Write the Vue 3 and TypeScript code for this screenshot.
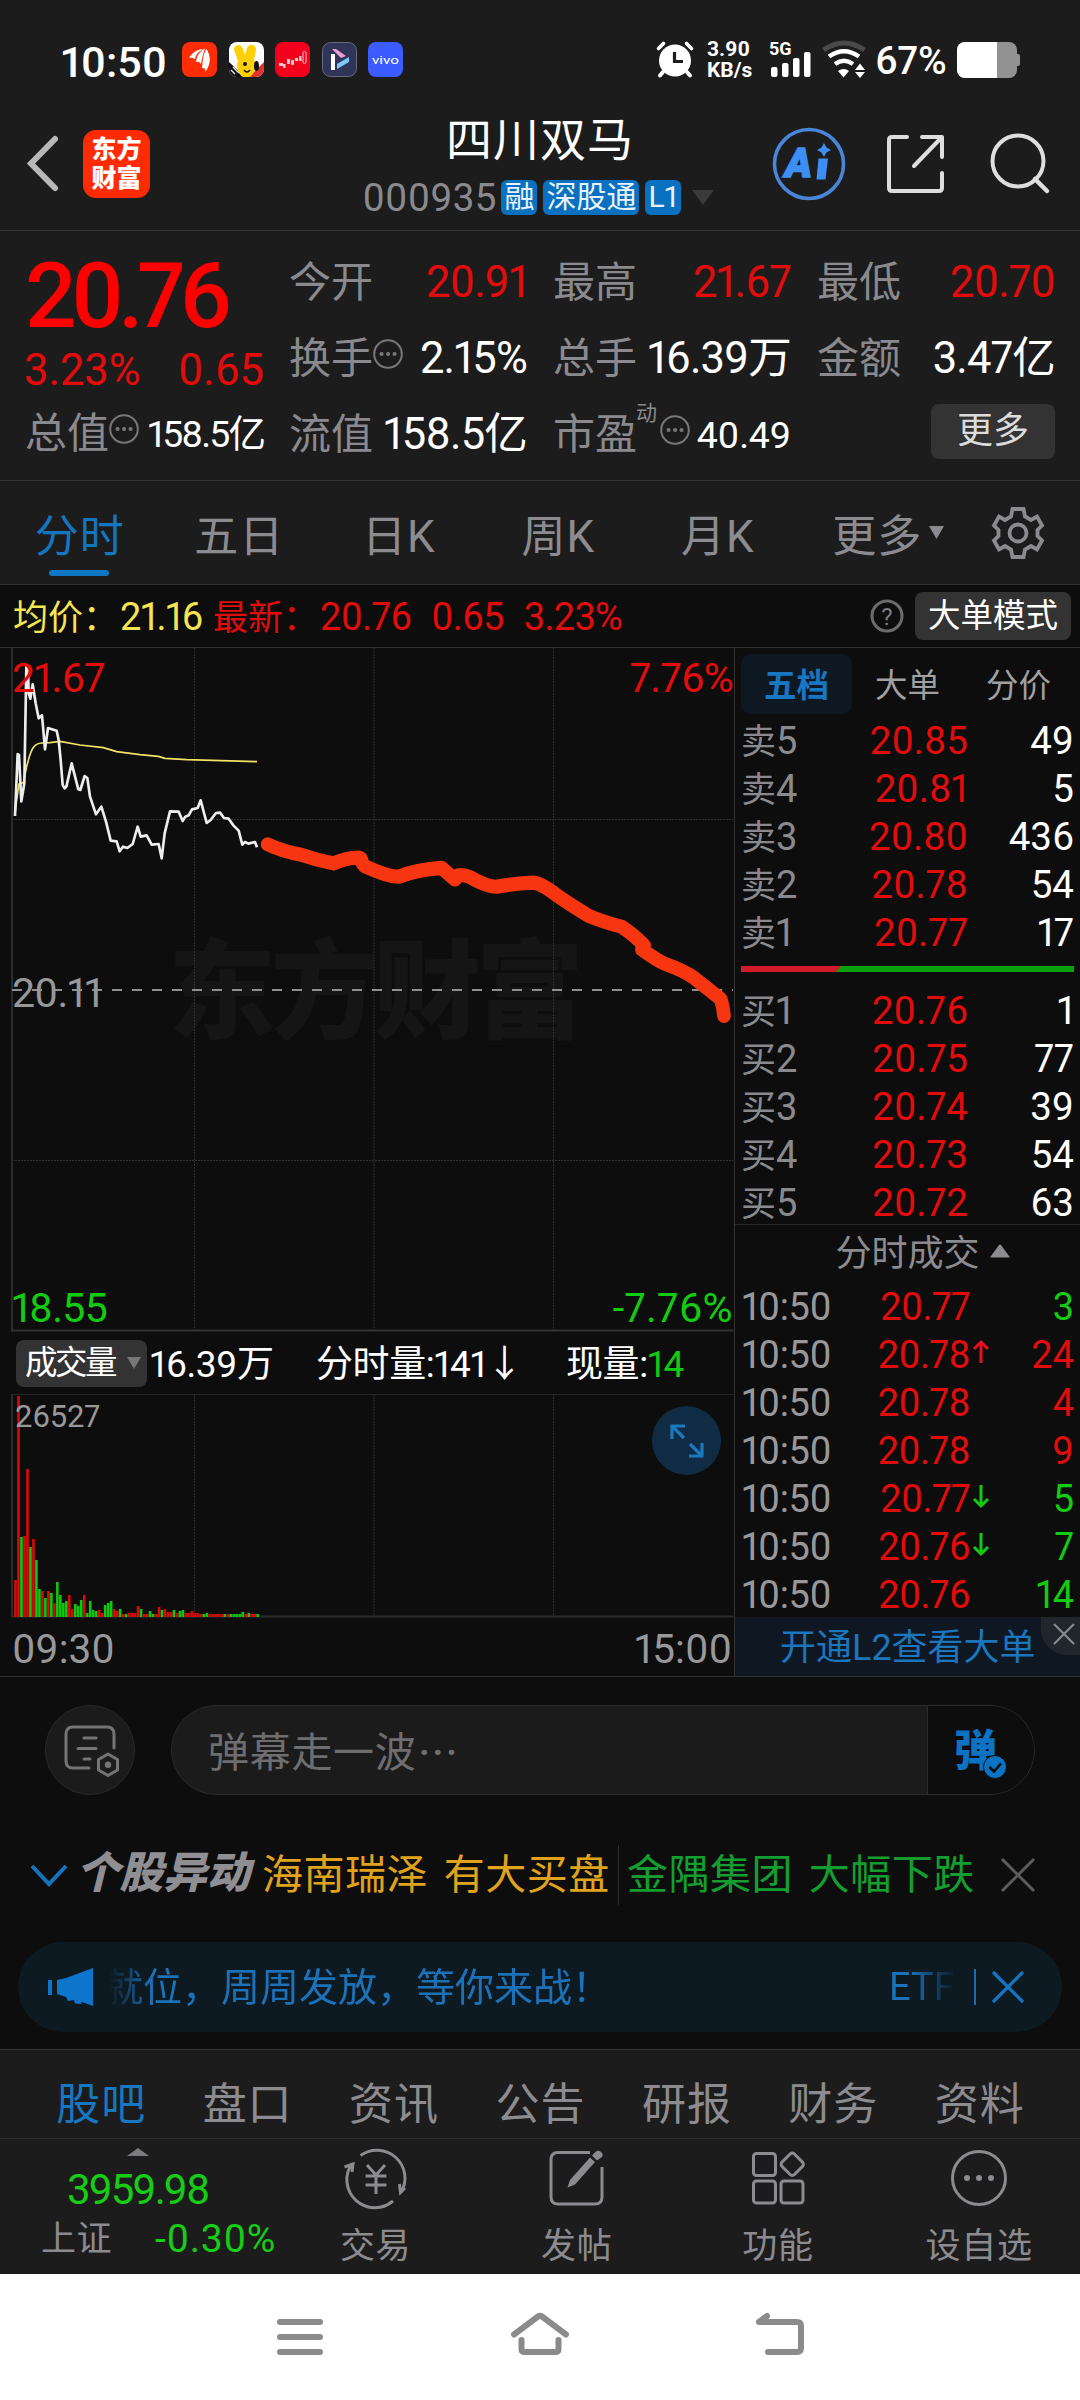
<script setup lang="ts">
interface Stat { label: string; value: string; red?: boolean; dots?: boolean; sup?: string; small?: boolean; tight?: boolean; more?: boolean }
interface Trade { price: string; dir?: 'up' | 'down'; vol: string; red?: boolean }

const stats: Stat[] = [
  { label: '今开', value: '20.91', red: true },
  { label: '最高', value: '21.67', red: true },
  { label: '最低', value: '20.70', red: true },
  { label: '换手', value: '2.15%', dots: true },
  { label: '总手', value: '16.39万' },
  { label: '金额', value: '3.47亿' },
  { label: '流值', value: '158.5亿' },
  { label: '市盈', value: '40.49', dots: true, sup: '动', small: true },
  { label: '', value: '', more: true },
]
const periods: string[] = ['分时', '五日', '日K', '周K', '月K', '更多']
const sells: [string, string, string][] = [
  ['卖', '20.85', '49'], ['卖', '20.81', '5'], ['卖', '20.80', '436'], ['卖', '20.78', '54'], ['卖', '20.77', '17'],
]
const buys: [string, string, string][] = [
  ['买', '20.76', '1'], ['买', '20.75', '77'], ['买', '20.74', '39'], ['买', '20.73', '54'], ['买', '20.72', '63'],
]
const trades: Trade[] = [
  { price: '20.77', vol: '3' },
  { price: '20.78', dir: 'up', vol: '24', red: true },
  { price: '20.78', vol: '4', red: true },
  { price: '20.78', vol: '9', red: true },
  { price: '20.77', dir: 'down', vol: '5' },
  { price: '20.76', dir: 'down', vol: '7' },
  { price: '20.76', vol: '14' },
]
const sections: string[] = ['股吧', '盘口', '资讯', '公告', '研报', '财务', '资料']

// One entry per minute: direction (r = up, g = down) and bar height.
const volumes: string =
  'r37 r221 g80 r81 r148 g70 r78 g57 g28 r26 g19 r26 g24 r14 g35 g22 g14 g16 r22 r8 g13 g11 g17 r22 g4 g16 g7 g6 r7 r4 g12 g14 g16 r8 r6 g8 r3 g3 r4 r4 r4 r11 g8 r3 r3 g6 g3 r3 r10 g7 r8 r5 r5 g7 r4 g6 g7 r4 r4 r6 r4 r4 r3 g3 g4 r3 r3 r3 r3 r3 g3 r3 g3 g3 g3 g3 g5 r3 g4 r3 r3 g3'
const bars = volumes.split(' ').map((v, i) => ({ up: v[0] === 'r', h: Number(v.slice(1)), x: 14.2 + i * 2.99 }))
</script>

<template>
  <div class="screen">
    <div class="status">
      <div class="clock">10:50</div>
      <div class="apps">
        <svg viewBox="0 0 35 35"><rect width="35" height="35" rx="8" fill="#ff2d05" /><path d="M7 16C10 11 15 7.500 21 7C17 9.500 14 12 13 17C10 15.500 9 15.500 7 16ZM14 20C14.500 14 18 9 23 6.500C21 12 20 16 19 22C17.500 20 16 19.500 14 20ZM20 26C21 18 21 12 24.500 7C30 13 29.500 23 23 30C24 27 23 26 20 26Z" fill="#fff" /><path d="M26 8C29.500 15 29 22 25.500 28" fill="none" stroke="#ff2d05" stroke-width="1.200" /></svg>
        <svg viewBox="0 0 35 35"><clipPath id="rabbit"><rect width="35" height="35" rx="8" /></clipPath><g clip-path="url(#rabbit)"><rect width="35" height="35" fill="#fff" /><path d="M0 20L16 35H0Z" fill="#111" /><path d="M35 20L20 35H35Z" fill="#e0332b" /><path d="M5 8C5 2 12 1 14 7L16 13L18 6C20 1 27 2 27 8L25 18C28 24 26 30 21 35H14C8 31 7 24 9 19Z" fill="#ffcf08" /><ellipse cx="27.500" cy="24" rx="2.500" ry="5" fill="#111" /><circle cx="16" cy="22" r="2" fill="#111" /><path d="M15 28Q18 32 21 28" fill="none" stroke="#111" stroke-width="1.300" /><path d="M4 25L10 31M2 28L6 32" stroke="#ddd" stroke-width="1.500" /></g></svg>
        <svg viewBox="0 0 35 35"><rect width="35" height="35" rx="8" fill="#f2001c" /><g fill="#ffc9cc"><rect x="4" y="21" width="4" height="3" /><rect x="8" y="22" width="2.500" height="4" /><rect x="12" y="17" width="3" height="5" /><rect x="16" y="18" width="3" height="5" /><rect x="20" y="16" width="3" height="3" /><rect x="24" y="14" width="2.500" height="5" /></g><rect x="28" y="9.500" width="3" height="12" rx="1.500" fill="none" stroke="#ffc9cc" /></svg>
        <svg viewBox="0 0 35 35"><rect x=".5" y=".5" width="34" height="34" rx="8" fill="#303459" stroke="#666a80" /><rect x="9" y="12" width="4" height="16" fill="#fff" /><path d="M10 7L14 7L24 14L19 16Z" fill="#ee9ccf" /><path d="M15 22L27 15V20L15 27Z" fill="#7cc9f5" /></svg>
        <svg viewBox="0 0 35 35"><rect width="35" height="35" rx="8" fill="#3d5cff" /><text x="17.500" y="21.500" text-anchor="middle" textLength="27" lengthAdjust="spacingAndGlyphs" font-size="10.500" font-weight="400" fill="#fff">vivo</text></svg>
      </div>
      <div class="signals">
        <svg class="alarm" viewBox="0 0 38 37"><circle cx="19" cy="19.500" r="16" fill="#fff" /><path d="M2.500 7.500L7.500 2.500M35.500 7.500L30.500 2.500" stroke="#fff" stroke-width="3.600" stroke-linecap="round" /><path d="M7 31L4 34.500M31 31L34 34.500" stroke="#fff" stroke-width="4" stroke-linecap="round" /><path d="M18.500 11V20.500H27" fill="none" stroke="#1c1c1c" stroke-width="3.200" /></svg>
        <div class="rate"><span>3.90</span><span>KB/s</span></div>
        <svg class="bars5g" viewBox="0 0 44 37"><text x="0" y="14" font-size="18" font-weight="700" fill="#fff">5G</text><g fill="#fff"><rect x="2" y="26" width="6.500" height="10" rx="2" /><rect x="13" y="22" width="6.500" height="14" rx="2" /><rect x="24" y="17" width="6.500" height="19" rx="2" /><rect x="35" y="11" width="6.500" height="25" rx="2" /></g></svg>
        <svg class="wifi" viewBox="0 0 44 37"><path d="M1.500 9Q22-5 42.500 9" fill="none" stroke="#4a4a4a" stroke-width="5" /><g fill="none" stroke="#fff" stroke-width="4.500"><path d="M7 15.500Q22 5 37 15.500" /><path d="M13 23Q22 16.500 31 23" /></g><path d="M16 30Q22 26 27 30L21.500 36.500Z" fill="#fff" /><path d="M38 22.500L43 29H33ZM38 37L43 31H33Z" fill="#fff" /></svg>
        <div class="pct">67%</div>
        <svg class="battery" viewBox="0 0 64 36"><rect width="60" height="36" rx="8" fill="#929292" /><rect x="58" y="12" width="5" height="12" rx="2" fill="#929292" /><path d="M8 0H40V36H8A8 8 0 0 1 0 28V8A8 8 0 0 1 8 0Z" fill="#fff" /></svg>
      </div>
    </div>

    <header class="header">
      <div class="side">
        <svg class="back" viewBox="0 0 34 58"><path d="M29 4L5 28.500L29 53" fill="none" stroke="#b8b8b8" stroke-width="6" stroke-linecap="round" stroke-linejoin="miter" /></svg>
        <div class="logo"><span>东方</span><span>财富</span></div>
      </div>
      <div class="title">
        <h1>四川双马</h1>
        <div class="code"><span class="num">000935</span><i>融</i><i>深股通</i><i>L1</i><svg viewBox="0 0 22 15"><path d="M0 0H22L11 15Z" fill="#3a3a3a" /></svg></div>
      </div>
      <div class="side right">
        <svg class="ai" viewBox="0 0 74 74"><circle cx="37" cy="37" r="34.500" fill="none" stroke="#4a86d8" stroke-width="3.600" /><text x="13" y="50" font-size="41" font-weight="900" font-style="italic" fill="#3d8ef5" stroke="#3d8ef5" stroke-width="1.500">A</text><path d="M46.500 31.500H56L53.500 52.500H44.500Z" fill="#3d8ef5" /><path d="M52 16L54.500 20.500L59 23L54.500 25.500L52 30L49.500 25.500L45 23L49.500 20.500Z" fill="#3d8ef5" /></svg>
        <svg class="share" viewBox="0 0 60 60"><g fill="none" stroke="#dedede" stroke-width="4" stroke-linecap="round" stroke-linejoin="round"><path d="M21 3H6Q3 3 3 6V54Q3 57 6 57H53Q56 57 56 54V39" /><path d="M36 3H56V23M55 4L28 32" /></g></svg>
        <svg class="search" viewBox="0 0 62 62"><circle cx="29" cy="28" r="25.500" fill="none" stroke="#dedede" stroke-width="4" /><path d="M46 46L58 58" stroke="#dedede" stroke-width="4.500" stroke-linecap="round" /></svg>
      </div>
    </header>

    <section class="quote">
      <div class="last">
        <div class="big">20.76</div>
        <div class="chg"><span>3.23%</span><span>0.65</span></div>
        <div class="stat mini"><label>总值</label><svg class="dots" viewBox="0 0 30 30"><circle cx="15" cy="15" r="13.800" /><path d="M8.500 15h.1M15 15h.1M21.500 15h.1" /></svg><b class="small tight">158.5亿</b></div>
      </div>
      <div class="grid">
        <div v-for="(s, i) in stats" :key="i" class="stat">
          <button v-if="s.more" class="more">更多</button>
          <template v-else>
            <label>{{ s.label }}</label><sup v-if="s.sup">{{ s.sup }}</sup>
            <svg v-if="s.dots" class="dots" viewBox="0 0 30 30"><circle cx="15" cy="15" r="13.800" /><path d="M8.500 15h.1M15 15h.1M21.500 15h.1" /></svg>
            <b :class="{ red: s.red, small: s.small }">{{ s.value }}</b>
          </template>
        </div>
      </div>
    </section>

    <nav class="periods">
      <div v-for="(p, i) in periods" :key="p" class="period" :class="{ on: i === 0 }"><span>{{ p }}</span><svg v-if="i === 5" viewBox="0 0 15 13"><path d="M0 0H15L7.500 13Z" fill="#8c8c90" /></svg></div>
      <svg class="gear" viewBox="0 0 52 52"><g fill="none" stroke="#8c8c90" stroke-width="3.800"><path d="M20.500 2H31.500L33 9.500L39 13L45 9.500L50 18.500L45.500 23V29L50 33.500L45 42.500L39 39L33 42.500L31.500 50H20.500L19 42.500L13 39L7 42.500L2 33.500L6.500 29V23L2 18.500L7 9.500L13 13L19 9.500Z" /><circle cx="26" cy="26" r="8.500" /></g></svg>
    </nav>

    <div class="info">
      <div class="yellow avg">均价：<span>21.16</span></div>
      <div class="red now">最新：<span>20.76</span><span>0.65</span><span>3.23%</span></div>
      <svg class="help" viewBox="0 0 34 34"><circle cx="17" cy="17" r="15" fill="none" stroke="#6c6c6e" stroke-width="3" /><text x="17" y="25.500" text-anchor="middle" font-size="24" fill="#7c7c7e">?</text></svg>
      <button class="mode">大单模式</button>
    </div>

    <main class="board">
      <div class="charts">
        <svg class="price" viewBox="0 0 735 684">
          <text class="mark" x="168" y="382" textLength="416" lengthAdjust="spacing">东方财富</text>
          <g class="gridline"><path d="M194.500 0V682M374 0V682M553.500 0V682M12 171.500H733M12 512.500H733" /></g>
          <path d="M12 0V684" stroke="#2b2b2b" stroke-width="2" />
          <path d="M12 682.500H733" stroke="#333" stroke-width="2" />
          <path d="M12 342H733" stroke="#8f8f8f" stroke-width="2" stroke-dasharray="10 10" />
          <g transform="translate(0 -8) scale(.33333)" fill="none" stroke-linejoin="round">
            <path d="M45 520L50 480L57 432L70 428L80 380Q92 330 102 320Q110 310 125 309L150 308L180 304L240 315L310 323L350 335L420 344L475 349L495 355L560 359L771 365" stroke="#f3e268" stroke-width="5" />
            <path d="M45 528L53 342L57 345L64 484L73 430L79 80L84 82L86 160L91 176L98 133L107 190L116 235L126 226L135 328L144 264L170 272L176 300L182 360L188 435L194 445L199 440L215 370L235 448L241 450L254 408L262 414L270 470L288 523L304 500L318 545L332 602L350 604L359 634L369 620L382 624L398 612L413 560L422 590L440 586L455 614L476 612L485 655L494 580L510 514L536 515L548 543L556 530L566 526L576 508L593 504L602 481L620 549L632 540L648 519L660 518L672 534L686 536L700 556L716 572L727 614L735 606L745 611L765 606L771 622" stroke="#ededed" stroke-width="8" />
          </g>
          <g transform="translate(240 152) scale(.33333 .34435)"><path d="M83 129Q130 150 180 158Q230 175 280 184Q320 168 355 167Q366 168 366 182L374 192Q440 222 475 223Q530 202 605 197L645 231L652 220Q660 214 690 224Q740 252 770 252Q830 241 880 240Q905 242 955 280Q1000 310 1045 336Q1090 354 1145 368Q1180 390 1212 422L1206 434Q1250 465 1275 476Q1330 495 1360 515Q1400 545 1442 578Q1450 600 1452 627" fill="none" stroke="#f73611" stroke-width="41" stroke-linecap="round" stroke-linejoin="round" /></g>
          <g class="axis"><text x="12" y="44" class="r">21.67</text><text x="733" y="44" class="r end">7.76%</text><text x="12" y="358.500" class="m">20.11</text><text x="12" y="674" class="g">18.55</text><text x="733" y="674" class="g end wide">-7.76%</text></g>
        </svg>
        <div class="volrow">
          <button>成交量<svg viewBox="0 0 14 12"><path d="M0 0H14L7 12Z" fill="#777" /></svg></button>
          <span class="v1">16.39万</span><span class="v2">分时量:141↓</span><span class="v3">现量:<em>14</em></span>
        </div>
        <div class="volume">
          <svg viewBox="0 0 735 224">
            <g class="gridline"><path d="M194.500 0V222M374 0V222M553.500 0V222" /></g>
            <path d="M12 .5H733" stroke="#262626" /><path d="M12 0V223M12 222.500H733" stroke="#2b2b2b" stroke-width="2" fill="none" />
            <rect v-for="(b, i) in bars" :key="i" :x="b.x" :y="223 - b.h" width="2.600" :height="b.h" :fill="b.up ? '#dd0808' : '#0fc80f'" />
            <text x="15" y="33" class="max">26527</text>
          </svg>
          <div class="expand"><svg viewBox="0 0 34 34"><path d="M2 15V2H15M3 3L14 14M32 19V32H19M31 31L20 20" fill="none" stroke="#1a78bd" stroke-width="3.200" /></svg></div>
        </div>
        <div class="times"><span>09:30</span><span>15:00</span></div>
      </div>

      <aside class="book">
        <div class="btabs"><b>五档</b><span>大单</span><span>分价</span></div>
        <div class="levels">
          <div v-for="(l, i) in sells" :key="i" class="lv"><span><i>{{ l[0] }}</i>{{ 5 - i }}</span><span class="p">{{ l[1] }}</span><span class="q">{{ l[2] }}</span></div>
        </div>
        <div class="ratio"><svg viewBox="0 0 333 6"><rect width="333" height="6" fill="#0aa00a" /><path d="M0 0H100L95 6H0Z" fill="#d01c2a" /></svg></div>
        <div class="levels buy">
          <div v-for="(l, i) in buys" :key="i" class="lv"><span><i>{{ l[0] }}</i>{{ i + 1 }}</span><span class="p">{{ l[1] }}</span><span class="q">{{ l[2] }}</span></div>
        </div>
        <div class="dealhead">分时成交<svg viewBox="0 0 22 14"><path d="M1 13.500L10 1Q11 0 12 1L21 13.500Z" fill="#8c8c90" /></svg></div>
        <div class="deals">
          <div v-for="(t, i) in trades" :key="i" class="deal">
            <span class="t">10:50</span><span class="p">{{ t.price }}</span>
            <svg viewBox="0 0 18 24"><path v-if="t.dir === 'up'" d="M9 23V2M2 9L9 2L16 9" fill="none" stroke="#e8101c" stroke-width="3" /><path v-if="t.dir === 'down'" d="M9 1V22M2 15L9 22L16 15" fill="none" stroke="#12cc12" stroke-width="3" /></svg>
            <span class="q" :class="t.red ? 'red' : 'green'">{{ t.vol }}</span>
          </div>
        </div>
        <div class="l2">开通L2查看大单<div class="l2x"><svg viewBox="0 0 22 22"><path d="M1 1L21 21M21 1L1 21" stroke="#86898c" stroke-width="2.200" /></svg></div></div>
      </aside>
    </main>

    <div class="danmu">
      <div class="round"><svg viewBox="0 0 58 52"><g fill="none" stroke="#747476" stroke-width="3" stroke-linecap="round"><path d="M26 43H10Q3 43 3 36V9Q3 2 10 2H44Q51 2 51 9V23" /><path d="M21 13H33M15 23.500H33M21 34H27" /><path d="M45 29L54.500 34.500V45L45 50.500L35.500 45V34.500Z" stroke-linejoin="round" /></g><circle cx="45" cy="39.700" r="3.200" fill="#747476" /></svg></div>
      <div class="input"><span>弹幕走一波<em>···</em></span><div class="send">弹<svg viewBox="0 0 24 24"><circle cx="12" cy="12" r="11.500" fill="#0c72c4" stroke="#0d0d0d" /><path d="M6.500 12L11 16.500L18 8.500" fill="none" stroke="#0d0d0d" stroke-width="2.600" /></svg></div></div>
    </div>

    <div class="alerts">
      <svg class="down" viewBox="0 0 38 23"><path d="M2 2L19 20L36 2" fill="none" stroke="#1374c0" stroke-width="4" /></svg>
      <strong>个股异动</strong>
      <span class="gold">海南瑞泽 有大买盘</span><i></i><span class="gr">金隅集团 大幅下跌</span>
      <svg class="x" viewBox="0 0 34 34"><path d="M1 1L33 33M33 1L1 33" stroke="#5c5c5e" stroke-width="3" /></svg>
    </div>

    <div class="banner">
      <svg class="horn" viewBox="0 0 46 40"><path d="M0 13H4V28H0ZM9 13Q14 12 18 11L45 1V39L37 36L33 35V37L27 36.500L26 33L20 34L18 30L9 27Z" fill="#0d76cc" /></svg>
      <div class="msg">就位，周周发放，等你来战！</div>
      <div class="etf">ETF</div>
      <i></i>
      <svg class="bx" viewBox="0 0 34 32"><path d="M2 1L32 31M32 1L2 31" stroke="#1276c4" stroke-width="3.200" /></svg>
    </div>

    <nav class="sections"><span v-for="(s, i) in sections" :key="s" :class="{ on: i === 0 }">{{ s }}</span></nav>

    <footer class="bottom">
      <div class="index">
        <svg viewBox="0 0 22 8"><path d="M0 8L11 0L22 8Z" fill="#7c7c80" /></svg>
        <div class="pts">3959.98</div>
        <div class="sh"><span>上证</span><em>-0.30%</em></div>
      </div>
      <div class="act"><svg viewBox="0 0 66 60"><g fill="none" stroke="#8c8c90" stroke-width="3"><path d="M17.500 7.500A28 28 0 0 1 58 44.500M62 40L57.500 44.500L56.500 36" /><path d="M50 53A28 28 0 0 1 9 15.500M1.500 19L10 16L9 24" /><path d="M24 17L33 27L42 17M33 27V46M22.500 28H43.500M22.500 37H43.500" /></g></svg><span>交易</span></div>
      <div class="act"><svg viewBox="0 0 66 60"><path d="M46 4.500H14Q7 4.500 7 11.500V49Q7 56 14 56H51Q58 56 58 49V19" fill="none" stroke="#8c8c90" stroke-width="3" /><path d="M26 32L46 9.500L51 14L31 36.500L23.500 39.500ZM48 7.500L52 3.500Q55 1.500 58 5Q59.500 7 58 9L53 12.500Z" fill="#8c8c90" /></svg><span>发帖</span></div>
      <div class="act"><svg viewBox="0 0 66 60"><g fill="none" stroke="#8c8c90" stroke-width="3"><rect x="8.500" y="5.500" width="22" height="22" rx="3" /><rect x="8.500" y="33" width="22" height="22" rx="3" /><rect x="36" y="33" width="22" height="22" rx="3" /><rect x="38.500" y="7.500" width="17.500" height="17.500" rx="3" transform="rotate(45 47.250 16.250)" /></g></svg><span>功能</span></div>
      <div class="act"><svg viewBox="0 0 66 60"><circle cx="33" cy="30" r="26.500" fill="none" stroke="#8c8c90" stroke-width="3" /><g fill="#8c8c90"><circle cx="21" cy="30" r="3" /><circle cx="33" cy="30" r="3" /><circle cx="45" cy="30" r="3" /></g></svg><span>设自选</span></div>
    </footer>

    <div class="sysnav">
      <svg viewBox="0 0 60 48"><path d="M10 8H50M10 23H50M10 38H50" /></svg>
      <svg viewBox="0 0 60 48"><path d="M4 20.500L28 2.500Q30 1 32 2.500L56 20.500M11.500 26V35Q11.500 38 14.500 38H45.500Q48.500 38 48.500 35V26" /></svg>
      <svg viewBox="0 0 60 48"><path d="M17 2L9 8H47Q51 8 51 12V34Q51 38 47 38H18" /></svg>
    </div>
  </div>
</template>

<style>
body { margin: 0; background: #0d0d0d; }
</style>

<style scoped>
.screen { width: 1080px; height: 2400px; overflow: hidden; display: flex; flex-direction: column; background: #0d0d0d; color: #fff; font-family: Roboto, "Noto Sans CJK SC", sans-serif; font-feature-settings: "pnum"; white-space: nowrap; }
.screen * { box-sizing: border-box; }
svg { display: block; flex: none; overflow: visible; }
svg text { font-family: Roboto, "Noto Sans CJK SC", sans-serif; }
button { border: 0; padding: 0; margin: 0; color: #fff; background: #333; font-family: inherit; flex: none; }
i, em { font-style: normal; }
.red { color: #e30c0c; }
.green { color: #12cc12; }
.yellow { color: #f5e552; }

.status { height: 119px; flex: none; background: #1c1c1c; display: flex; align-items: center; padding: 0 59px 0 61px; }
.clock { width: 121px; font-size: 43px; font-weight: 500; line-height: 50px; margin-top: 4px; }
.apps { display: flex; gap: 11.600px; }
.apps svg { width: 35px; height: 35px; }
.signals { margin-left: auto; display: flex; align-items: center; }
.alarm { width: 38px; height: 37px; }
.rate { width: 60px; margin-left: 11px; font-size: 21px; font-weight: 700; line-height: 21.500px; display: flex; flex-direction: column; padding-left: 2px; margin-top: 1px; }
.bars5g { width: 44px; height: 37px; margin-left: 4px; }
.wifi { width: 44px; height: 37px; margin-left: 9px; }
.pct { width: 91px; padding-left: 9px; font-size: 39px; font-weight: 500; line-height: 44px; letter-spacing: 0; margin-top: 3px; }
.battery { width: 64px; height: 36px; }

.header { height: 112px; flex: none; background: #1c1c1c; border-bottom: 1px solid #333; display: flex; justify-content: space-between; }
.side { width: 310px; display: flex; align-items: center; padding: 0 0 22px 26px; }
.back { width: 34px; height: 58px; }
.logo { width: 67px; height: 68px; margin-left: 23px; border-radius: 13px; background: #ff2b05; display: flex; flex-direction: column; align-items: center; justify-content: center; font-size: 25px; line-height: 29px; font-weight: 900; }
.title { display: flex; flex-direction: column; align-items: center; }
.title h1 { margin: 0; font-size: 46px; letter-spacing: 1px; font-weight: 400; line-height: 43px; height: 58px; }
.code { display: flex; align-items: center; height: 40px; margin-left: -4px; }
.code .num { font-size: 38.500px; letter-spacing: .3px; color: #8a8a8e; width: 139px; line-height: 40px; padding-top: 1px; }
.code i { height: 35px; line-height: 34px; padding: 0 3px; border-radius: 6px; background: #0a70c0; color: #e6f3fc; font-size: 30px; margin-right: 6px; }
.code svg { width: 22px; height: 15px; margin-left: 5px; }
.right { padding-left: 0; padding-right: 29px; justify-content: flex-end; gap: 40px; }
.ai { width: 74px; height: 74px; }
.share { width: 60px; height: 60px; }
.search { width: 62px; height: 62px; margin-left: 3px; }

.quote { height: 250px; flex: none; background: #1c1c1c; border-bottom: 1px solid #333; padding: 13px 24px 0 25px; display: flex; }
.last { width: 264px; }
.big { height: 104px; line-height: 104px; font-size: 91px; font-weight: 500; color: #f00; letter-spacing: -6px; margin-left: 0; }
.chg { height: 46px; line-height: 46px; font-size: 43.500px; color: #e30c0c; display: flex; justify-content: space-between; padding-right: 25px; margin-left: -1px; }
.grid { display: grid; grid-template-columns: 238px 238px 238px; column-gap: 26px; grid-auto-rows: 76px; }
.stat { display: flex; align-items: center; }
.mini { height: 78px; width: 239px; }
label { font-size: 42px; line-height: 76px; color: #8a8a8e; margin-top: 2px; }
.stat b { margin-left: auto; font-weight: 400; font-size: 43.500px; line-height: 76px; letter-spacing: -.8px; margin-top: 2px; }
.stat b.small { font-size: 37.500px; letter-spacing: -.2px; }
.stat b.tight { letter-spacing: -1.900px; }
.dots { width: 30px; height: 30px; margin: 0 0 8px; fill: none; stroke: #78787a; stroke-width: 2; }
.dots path { stroke-width: 4; stroke-linecap: round; }
sup { font-size: 21px; line-height: 24px; color: #8a8a8e; margin: -42px 3px 0 -1px; }
.more { width: 124px; height: 55px; margin-left: auto; margin-top: -6px; border-radius: 8px; font-size: 36px; line-height: 52px; color: #dcdcdc; }

.periods { height: 104px; flex: none; background: #1c1c1c; border-bottom: 1px solid #333; display: flex; align-items: center; }
.period { width: 159.500px; height: 103px; display: flex; align-items: center; justify-content: center; font-size: 44px; color: #8c8c90; position: relative; letter-spacing: 1px; }
.period svg { width: 15px; height: 13px; margin-left: 7px; margin-right: -22px; }
.period.on { color: #1576c0; }
.period span { line-height: 60px; margin-top: 8px; }
.period.on::after { content: ""; position: absolute; left: 49px; bottom: 8px; width: 60px; height: 6px; border-radius: 3px; background: #0f77c4; }
.gear { width: 52px; height: 52px; margin: 0 0 0 35px; }

.info { height: 63px; flex: none; border-bottom: 1px solid #333; display: flex; align-items: center; padding: 0 9px 0 13px; font-size: 35px; line-height: 60px; }
.info > div { margin-top: 4px; }
.info span { font-size: 38px; letter-spacing: -.7px; }
.avg { width: 200px; }
.avg span { margin-left: 2px; }
.now span { margin-left: 2px; }
.now span + span { margin-left: 20px; }
.help { width: 34px; height: 34px; margin-left: auto; }
.mode { width: 156px; height: 48px; border-radius: 8px; margin-left: 11px; font-size: 32.500px; line-height: 48px; }

.board { height: 1029px; flex: none; display: flex; border-bottom: 1px solid #333; }
.charts { width: 735px; border-right: 1px solid #333; }
.price { width: 735px; height: 684px; }
.gridline path { fill: none; stroke: #303030; stroke-width: 1; stroke-dasharray: 2 1; }
.mark { font-size: 108px; font-weight: 900; fill: #151515; }
.axis text { font-size: 41px; letter-spacing: -.7px; }
.axis .end { text-anchor: end; }
.axis .wide { letter-spacing: .4px; }
.axis .r { fill: #e30c0c; }
.axis .g { fill: #12cc12; }
.axis .m { fill: #98989a; }
.volrow { height: 62px; display: flex; align-items: center; font-size: 37px; line-height: 60px; letter-spacing: -.4px; }
.volrow > span { margin-top: 4px; }
.volrow button { width: 131px; height: 47px; margin-left: 16px; border-radius: 8px; font-size: 32.500px; letter-spacing: -2.500px; line-height: 46px; display: flex; align-items: center; padding-left: 9px; }
.volrow button svg { width: 14px; height: 12px; margin-left: 12px; }
.v1 { width: 169px; padding-left: 3px; }
.v2 { width: 250px; }
.volrow em { color: #12cc12; }
.volume { height: 224px; position: relative; }
.volume > svg { width: 735px; height: 224px; }
.max { font-size: 31px; fill: #98989a; letter-spacing: -.2px; }
.expand { position: absolute; left: 652px; top: 12px; width: 69px; height: 69px; border-radius: 50%; background: #102c44; display: flex; align-items: center; justify-content: center; }
.expand svg { width: 34px; height: 34px; }
.times { height: 58px; display: flex; justify-content: space-between; padding: 2px 2px 0 12px; font-size: 40.500px; line-height: 58px; color: #98989a; }

.book { width: 345px; }
.btabs { height: 68px; display: flex; padding: 6px 0 0 6px; font-size: 32.500px; line-height: 64px; color: #a0a0a2; }
.btabs b { width: 111px; height: 60px; border-radius: 10px; background: #0e1822; color: #1777c2; text-align: center; font-weight: 700; }
.btabs span { width: 111px; text-align: center; }
.lv { height: 48px; display: flex; font-size: 38.500px; line-height: 50px; padding: 0 6px 0 6px; }
.lv span:first-child { width: 101px; color: #8a8a8e; font-size: 38px; }
.lv i { font-size: 35px; }
.lv .p { width: 126px; text-align: right; color: #e30c0c; }
.lv .q, .deal .q { margin-left: auto; text-align: right; }
.ratio { height: 26px; margin-top: 4px; padding: 6px 6px 0; }
.ratio svg { width: 333px; height: 6px; }
.buy { height: 238px; padding-top: 0; }
.dealhead { height: 59px; border-top: 1px solid #262626; display: flex; align-items: center; justify-content: center; font-size: 36px; line-height: 58px; color: #8c8c90; padding-left: 33px; }
.dealhead svg { width: 22px; height: 14px; margin: 0 2px 6px 9px; }
.deals { height: 334px; }
.deal { height: 48px; display: flex; align-items: center; font-size: 38px; line-height: 48px; padding: 0 6px 0 7px; }
.deal .t { width: 102px; color: #98989a; letter-spacing: -.4px; }
.deal .p { width: 126px; text-align: right; color: #e30c0c; letter-spacing: -.6px; }
.deal svg { width: 18px; height: 24px; margin: -6px 0 0 2px; }
.l2 { position: relative; height: 59px; background: #0f1722; color: #1c76bd; font-size: 36px; line-height: 63px; padding-left: 45px; }
.l2x { position: absolute; right: 0; top: 0; width: 39px; height: 38px; background: #20262c; border-bottom-left-radius: 26px; padding: 6px 0 0 12px; }
.l2x svg { width: 22px; height: 22px; }

.danmu { height: 148px; flex: none; display: flex; padding: 28px 0 0 45px; }
.round { width: 90px; height: 90px; border-radius: 50%; background: #1b1b1b; border: 1px solid #2a2a2a; display: flex; align-items: center; justify-content: center; }
.round svg { width: 58px; height: 52px; margin: 2px 0 0 3px; }
.input { width: 864px; height: 90px; margin-left: 36px; border-radius: 45px; border: 1px solid #2a2a2a; background: #1b1b1b; overflow: hidden; display: flex; justify-content: space-between; font-size: 41px; letter-spacing: .7px; line-height: 87px; color: #6e6e70; padding-left: 36px; font-family: "Noto Sans CJK SC", sans-serif; }
.input em { font-family: Roboto, sans-serif; letter-spacing: 2px; margin-left: 2px; font-weight: 500; }
.send { width: 107px; background: #0d0d0d; border-left: 1px solid #2a2a2a; color: #0c72c4; font-weight: 900; font-size: 43px; padding-left: 26px; line-height: 82px; position: relative; }
.send svg { position: absolute; left: 55px; top: 49px; width: 24px; height: 24px; }

.alerts { height: 100px; flex: none; display: flex; align-items: center; padding-left: 30px; font-size: 41px; letter-spacing: .5px; line-height: 60px; }
.alerts .down { width: 38px; height: 23px; }
.alerts strong { width: 186px; margin-left: 8px; font-size: 43.500px; font-weight: 900; color: #8f8f93; font-style: italic; letter-spacing: 0; margin-top: -2px; }
.gold, .gr { word-spacing: 5px; }
.gold { color: #e0a31e; width: 356px; }
.alerts i { width: 1px; height: 60px; background: #2c2c2c; margin-right: 8px; }
.gr { color: #149e30; }
.alerts .x { width: 34px; height: 34px; margin-left: auto; margin-right: 45px; }

.banner { width: 1044px; height: 90px; flex: none; margin: 17px 0 0 18px; border-radius: 45px; background: #0e1a22; color: #1c72b8; display: flex; align-items: center; padding-left: 30px; font-size: 39px; line-height: 84px; font-family: "Noto Sans CJK SC", sans-serif; }
.horn { width: 46px; height: 40px; }
.msg { width: 765px; margin-left: 10px; margin-top: -6px; -webkit-mask-image: linear-gradient(90deg, transparent 5px, #000 48px); mask-image: linear-gradient(90deg, transparent 5px, #000 48px); }
.etf { width: 84px; padding-left: 20px; font-family: Roboto, sans-serif; font-size: 38px; -webkit-mask-image: linear-gradient(90deg, #000 40px, rgba(0,0,0,.1) 82px); mask-image: linear-gradient(90deg, #000 40px, rgba(0,0,0,.1) 82px); }
.banner i { width: 2px; height: 36px; background: #1a6db0; margin-left: 21px; }
.bx { width: 34px; height: 32px; margin-left: 15px; }

.sections { height: 90px; flex: none; margin-top: 17px; border-top: 1px solid #333; border-bottom: 1px solid #2a2a2a; background: #1c1c1c; display: flex; padding: 8px 27px 0 28px; font-size: 44px; letter-spacing: 1px; line-height: 94px; color: #8c8c90; }
.sections span { flex: 1; text-align: center; }
.sections .on { color: #1777c0; }

.bottom { height: 135px; flex: none; background: #1c1c1c; display: flex; }
.index { width: 275px; padding-top: 9px; }
.index svg { width: 22px; height: 8px; margin-left: 127px; }
.pts { font-size: 42px; line-height: 50px; color: #16cc16; letter-spacing: -1.900px; margin: 9px 0 0 67px; }
.sh { display: flex; align-items: center; height: 50px; font-size: 35px; line-height: 50px; color: #8c8c90; padding: 0 0 0 41px; letter-spacing: .5px; margin-top: -1px; }
.sh span { margin-top: 2px; }
.sh em { color: #16cc16; font-size: 39px; margin-left: 43px; letter-spacing: .7px; }
.act { width: 201.200px; display: flex; flex-direction: column; align-items: center; padding-top: 9px; font-size: 35px; letter-spacing: .7px; line-height: 44px; color: #8c8c90; }
.act svg { width: 66px; height: 60px; }
.act span { margin-top: 17px; }

.sysnav { height: 126px; flex: none; background: #fff; display: flex; justify-content: center; gap: 180px; padding-top: 40px; }
.sysnav svg { width: 60px; height: 48px; fill: none; stroke: #8b8b8b; stroke-width: 6; stroke-linecap: round; stroke-linejoin: round; }
</style>
